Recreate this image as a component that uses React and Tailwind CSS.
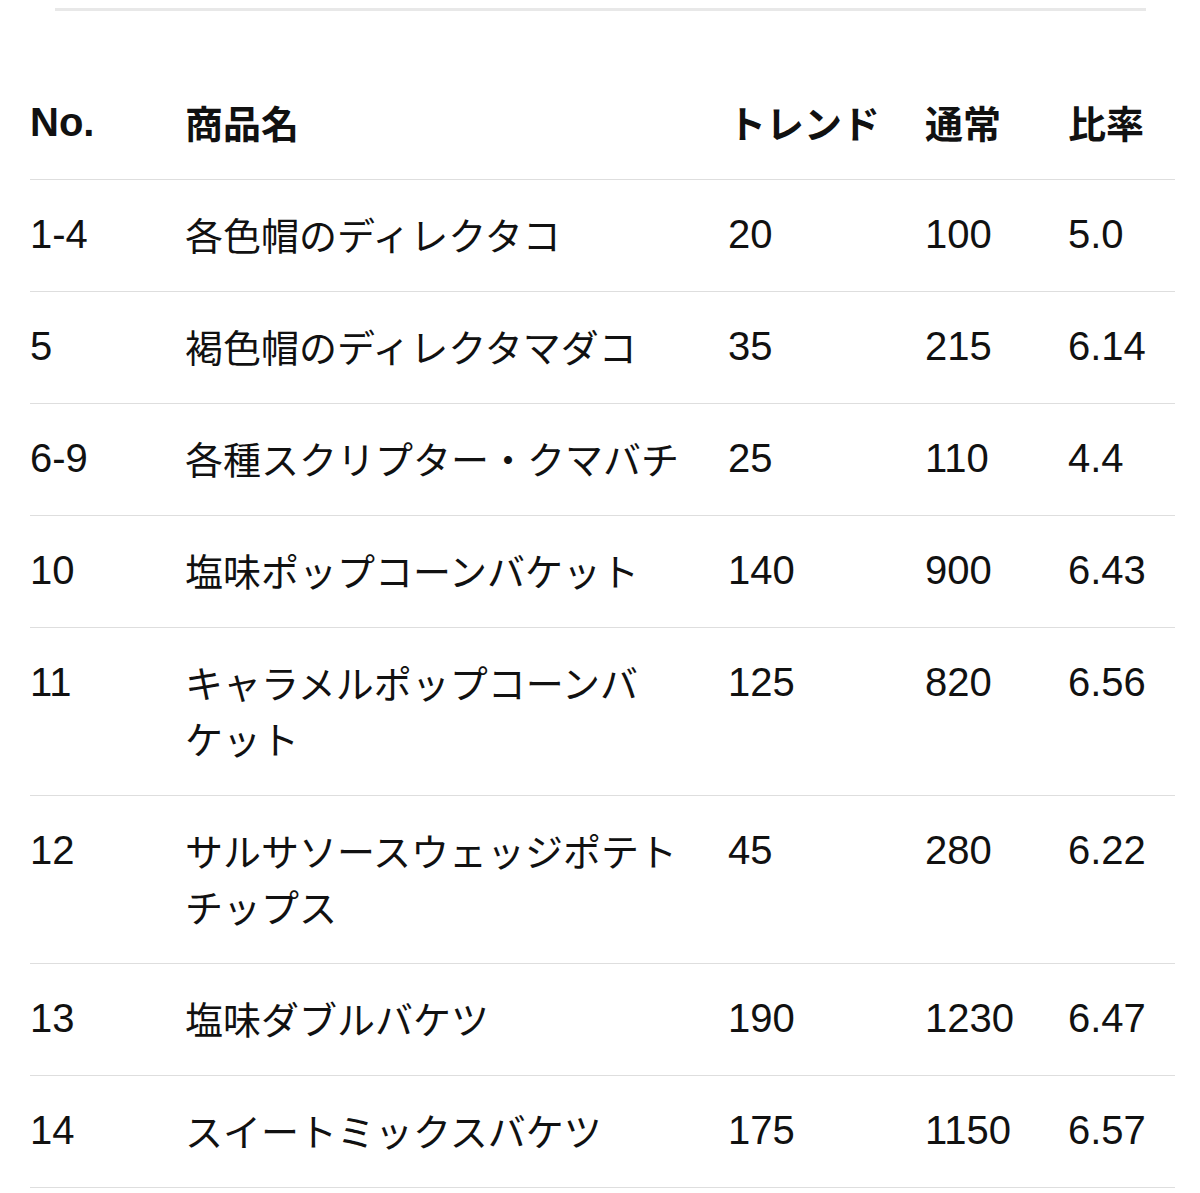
import React from "react";

const rows = [
	{ no: "1-4", name: "各色帽のディレクタコ", trend: "20", normal: "100", ratio: "5.0" },
	{ no: "5", name: "褐色帽のディレクタマダコ", trend: "35", normal: "215", ratio: "6.14" },
	{ no: "6-9", name: "各種スクリプター・クマバチ", trend: "25", normal: "110", ratio: "4.4" },
	{ no: "10", name: "塩味ポップコーンバケット", trend: "140", normal: "900", ratio: "6.43" },
	{ no: "11", name: "キャラメルポップコーンバケット", trend: "125", normal: "820", ratio: "6.56" },
	{ no: "12", name: "サルサソースウェッジポテトチップス", trend: "45", normal: "280", ratio: "6.22" },
	{ no: "13", name: "塩味ダブルバケツ", trend: "190", normal: "1230", ratio: "6.47" },
	{ no: "14", name: "スイートミックスバケツ", trend: "175", normal: "1150", ratio: "6.57" },
];

// keep small kana / long vowel mark glued to the previous char (kinsoku)
const glue = (s) => s.replace(/([ャュョッァィゥェォー])/g, "\u2060$1");

const latin = "font-['Liberation_Sans','Noto_Sans_CJK_JP',sans-serif] text-[40px] leading-[56px]";
const cjk = "font-['Noto_Sans_CJK_JP',sans-serif] text-[38px] leading-[56px] [line-break:strict]";
const grid = "grid grid-cols-[155px_543px_197px_143px_1fr] items-start border-b border-[#dedede] pt-[26px] pb-[29px]";

export default function App() {
	return (
		<div lang="ja" className="min-h-[1193px] bg-white text-[#111] pt-[8px]">
			{/* top divider */}
			<div className="ml-[55px] w-[1091px] h-[3px] bg-[#e8e8e8]" />

			<div className="ml-[30px] w-[1145px] mt-[57px]">
				{/* header */}
				<div className={grid}>
					<div className={`${latin} font-bold`}>No.</div>
					<div className={`${cjk} font-bold`}>商品名</div>
					<div className={`${cjk} font-bold`}>トレンド</div>
					<div className={`${cjk} font-bold`}>通常</div>
					<div className={`${cjk} font-bold`}>比率</div>
				</div>

				{rows.map((r) => (
					<div key={r.no} className={grid}>
						<div className={latin}>{r.no}</div>
						<div className={`${cjk} pr-[40px]`}>{glue(r.name)}</div>
						<div className={latin}>{r.trend}</div>
						<div className={latin}>{r.normal}</div>
						<div className={latin}>{r.ratio}</div>
					</div>
				))}
			</div>
		</div>
	);
}
